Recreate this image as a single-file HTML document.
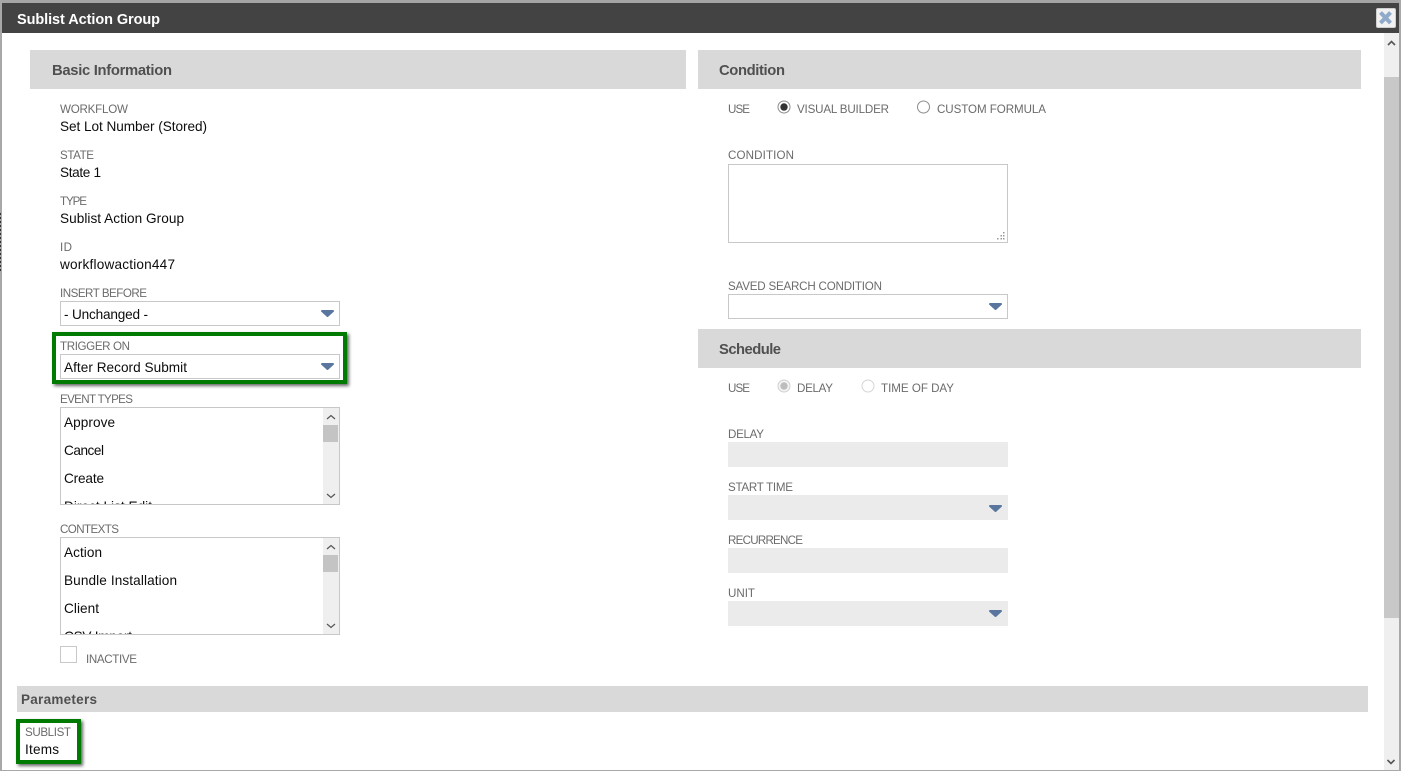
<!DOCTYPE html>
<html><head><meta charset="utf-8"><style>
html,body{margin:0;padding:0;background:#fff;width:1401px;height:771px;overflow:hidden}
svg{display:block}
text{font-family:"Liberation Sans",sans-serif;font-size:13.6px;fill:#0c0c0c}
.l{font-size:11.6px;fill:#6b6b6b}
.h{font-size:14.8px;font-weight:bold;fill:#505050}
.i{fill:#ebebeb}
.b{fill:#fff;stroke:#c8c8c8;stroke-width:1}
.a{fill:#5a769f;stroke:#5a769f;stroke-width:2;stroke-linejoin:round}
.c{fill:none;stroke:#555;stroke-width:1.6}
</style></head><body>
<svg width="1401" height="771" viewBox="0 0 1401 771" xmlns="http://www.w3.org/2000/svg">
<defs>
<filter id="s" x="-20%" y="-40%" width="140%" height="180%"><feDropShadow dx="2" dy="2" stdDeviation="1.5" flood-color="#000" flood-opacity=".6"/></filter>
<clipPath id="c1"><rect x="61" y="408" width="262" height="96"/></clipPath>
<clipPath id="c2"><rect x="61" y="538" width="262" height="96"/></clipPath>
</defs>
<rect width="1401" height="771" fill="#fff"/>
<!-- frame -->
<rect x="0" y="0" width="1401" height="3" fill="#a5a5a5"/>
<rect x="0" y="0" width="2" height="771" fill="#a8a8a8"/>
<path d="M0.500 213V272" stroke="#333" stroke-width="1" stroke-dasharray="2 2" fill="none"/>
<rect x="1399" y="0" width="2" height="771" fill="#a8a8a8"/>
<rect x="0" y="770" width="1401" height="1" fill="#a8a8a8"/>
<rect x="2" y="3" width="1397" height="30" fill="#434343"/>
<text x="17" y="24" style="font-size:14.500px;font-weight:bold;fill:#fff" textLength="143">Sublist Action Group</text>
<!-- close -->
<rect x="1376.500" y="8.500" width="19" height="19" rx="1.500" fill="#f1f1f1" stroke="#cfcfcf"/>
<path d="M1380.500 12.500l10 10.500M1390.500 12.500l-10 10.500" stroke="#8faaca" stroke-width="4" fill="none"/>
<!-- scrollbar -->
<rect x="1384" y="33" width="15" height="737" fill="#efefef"/>
<rect x="1384" y="77" width="15" height="541" fill="#c8c8c8"/>
<path class="c" d="M1388 45l3.500-3.500l3.500 3.500"/>
<path class="c" d="M1387.500 760l3.500 3.500l3.500-3.500"/>
<!-- headers -->
<rect x="30" y="50" width="656" height="39" fill="#d9d9d9"/>
<rect x="698" y="50" width="663" height="39" fill="#d9d9d9"/>
<rect x="698" y="329" width="663" height="39" fill="#d9d9d9"/>
<rect x="17" y="686" width="1351" height="26" fill="#d9d9d9"/>
<text class="h" x="52" y="75" textLength="120">Basic Information</text>
<text class="h" x="719" y="75" textLength="66">Condition</text>
<text class="h" x="719" y="354" textLength="62">Schedule</text>
<text class="h" x="21" y="704" textLength="76" style="font-size:13.500px">Parameters</text>
<!-- left fields -->
<text class="l" x="60" y="113" textLength="68">WORKFLOW</text>
<text x="60" y="131" textLength="147">Set Lot Number (Stored)</text>
<text class="l" x="60" y="159" textLength="34">STATE</text>
<text x="60" y="177" textLength="41">State 1</text>
<text class="l" x="60" y="205" textLength="27">TYPE</text>
<text x="60" y="223" textLength="124">Sublist Action Group</text>
<text class="l" x="60" y="251" textLength="12">ID</text>
<text x="60" y="269" textLength="115">workflowaction447</text>
<text class="l" x="60" y="297" textLength="87">INSERT BEFORE</text>
<rect class="b" x="60.500" y="301.500" width="279" height="24"/>
<text x="64" y="319" textLength="84">- Unchanged -</text>
<path class="a" d="M322 311h11l-5.500 5z"/>
<!-- trigger -->
<rect x="54" y="334" width="291" height="48" fill="#fff" stroke="#047a04" stroke-width="4" filter="url(#s)"/>
<rect x="56" y="336" width="287" height="44" fill="#fff"/>
<text class="l" x="60" y="350" textLength="70">TRIGGER ON</text>
<rect class="b" x="60.500" y="354.500" width="279" height="24"/>
<text x="64" y="372" textLength="123">After Record Submit</text>
<path class="a" d="M322 364h11l-5.500 5z"/>
<!-- event types -->
<text class="l" x="60" y="403" textLength="73">EVENT TYPES</text>
<rect class="b" x="60.500" y="407.500" width="279" height="97"/>
<g clip-path="url(#c1)">
<text x="64" y="427" textLength="51">Approve</text>
<text x="64" y="455" textLength="40">Cancel</text>
<text x="64" y="483" textLength="40">Create</text>
<text x="64" y="511" textLength="88">Direct List Edit</text>
</g>
<rect x="323" y="408" width="16" height="96" fill="#efefef"/>
<rect x="323" y="425" width="15" height="17" fill="#c4c4c4"/>
<path class="c" style="stroke-width:1.200" d="M327 419l4-3.500l4 3.500"/>
<path class="c" style="stroke-width:1.200" d="M327 494l4 3.500l4-3.500"/>
<!-- contexts -->
<text class="l" x="60" y="533" textLength="59">CONTEXTS</text>
<rect class="b" x="60.500" y="537.500" width="279" height="97"/>
<g clip-path="url(#c2)">
<text x="64" y="557" textLength="38">Action</text>
<text x="64" y="585" textLength="113">Bundle Installation</text>
<text x="64" y="613" textLength="35">Client</text>
<text x="64" y="641" textLength="68">CSV Import</text>
</g>
<rect x="323" y="538" width="16" height="96" fill="#efefef"/>
<rect x="323" y="555" width="15" height="17" fill="#c4c4c4"/>
<path class="c" style="stroke-width:1.200" d="M327 549l4-3.500l4 3.500"/>
<path class="c" style="stroke-width:1.200" d="M327 624l4 3.500l4-3.500"/>
<!-- inactive -->
<rect class="b" x="60.500" y="646.500" width="16" height="16"/>
<text class="l" x="86" y="663" textLength="51">INACTIVE</text>
<!-- sublist -->
<rect x="18" y="721" width="61" height="41" fill="#fff" stroke="#047a04" stroke-width="4" filter="url(#s)"/>
<rect x="20" y="723" width="57" height="37" fill="#fff"/>
<text class="l" x="25" y="736" textLength="46">SUBLIST</text>
<text x="25" y="754" textLength="34">Items</text>
<!-- condition -->
<text class="l" x="728" y="113" textLength="22">USE</text>
<circle cx="784" cy="107" r="6" fill="#fff" stroke="#8c8c8c"/>
<circle cx="784" cy="107" r="3.700" fill="#333"/>
<text class="l" x="797" y="113" textLength="92">VISUAL BUILDER</text>
<circle cx="923.500" cy="107" r="6" fill="#fff" stroke="#8c8c8c"/>
<text class="l" x="937" y="113" textLength="109">CUSTOM FORMULA</text>
<text class="l" x="728" y="159" textLength="66">CONDITION</text>
<rect class="b" x="728.500" y="164.500" width="279" height="78"/>
<path d="M1003 232h1.500v1.500h-1.500zM1000.500 235h1.500v1.500h-1.500zM1003 235h1.500v1.500h-1.500zM997 238h1.500v1.500h-1.500zM1000.500 238h1.500v1.500h-1.500zM1003 238h1.500v1.500h-1.500z" fill="#999"/>
<text class="l" x="728" y="290" textLength="154">SAVED SEARCH CONDITION</text>
<rect class="b" x="728.500" y="294.500" width="279" height="24"/>
<path class="a" d="M990 304h11l-5.500 5z"/>
<!-- schedule -->
<text class="l" x="728" y="392" textLength="22">USE</text>
<circle cx="784" cy="386" r="6" fill="#f4f4f4" stroke="#d0d0d0"/>
<circle cx="784" cy="386" r="3.700" fill="#bdbdbd"/>
<text class="l" x="797" y="392" textLength="36">DELAY</text>
<circle cx="868" cy="386" r="6" fill="#fff" stroke="#d5d5d5"/>
<text class="l" x="881" y="392" textLength="73">TIME OF DAY</text>
<text class="l" x="728" y="438" textLength="36">DELAY</text>
<rect class="i" x="728" y="442" width="280" height="25"/>
<text class="l" x="728" y="491" textLength="65">START TIME</text>
<rect class="i" x="728" y="495" width="280" height="25"/>
<path class="a" d="M990 506h11l-5.500 5z"/>
<text class="l" x="728" y="544" textLength="75">RECURRENCE</text>
<rect class="i" x="728" y="548" width="280" height="25"/>
<text class="l" x="728" y="597" textLength="27">UNIT</text>
<rect class="i" x="728" y="601" width="280" height="25"/>
<path class="a" d="M990 611h11l-5.500 5z"/>
</svg>
</body></html>
